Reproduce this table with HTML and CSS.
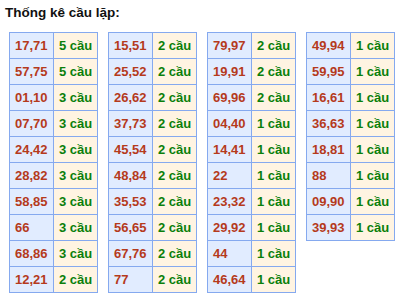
FILE: index.html
```html
<!DOCTYPE html>
<html>
<head>
<meta charset="utf-8">
<link rel="stylesheet" href="styles.css">
</head>
<body>
<div class="title">Thống kê cầu lặp:</div>
<div class="tables">
  <div class="tbl">
    <div class="row"><div class="num">17,71</div><div class="cnt">5 cầu</div></div>
    <div class="row"><div class="num">57,75</div><div class="cnt">5 cầu</div></div>
    <div class="row"><div class="num">01,10</div><div class="cnt">3 cầu</div></div>
    <div class="row"><div class="num">07,70</div><div class="cnt">3 cầu</div></div>
    <div class="row"><div class="num">24,42</div><div class="cnt">3 cầu</div></div>
    <div class="row"><div class="num">28,82</div><div class="cnt">3 cầu</div></div>
    <div class="row"><div class="num">58,85</div><div class="cnt">3 cầu</div></div>
    <div class="row"><div class="num">66</div><div class="cnt">3 cầu</div></div>
    <div class="row"><div class="num">68,86</div><div class="cnt">3 cầu</div></div>
    <div class="row"><div class="num">12,21</div><div class="cnt">2 cầu</div></div>
  </div>
  <div class="tbl">
    <div class="row"><div class="num">15,51</div><div class="cnt">2 cầu</div></div>
    <div class="row"><div class="num">25,52</div><div class="cnt">2 cầu</div></div>
    <div class="row"><div class="num">26,62</div><div class="cnt">2 cầu</div></div>
    <div class="row"><div class="num">37,73</div><div class="cnt">2 cầu</div></div>
    <div class="row"><div class="num">45,54</div><div class="cnt">2 cầu</div></div>
    <div class="row"><div class="num">48,84</div><div class="cnt">2 cầu</div></div>
    <div class="row"><div class="num">35,53</div><div class="cnt">2 cầu</div></div>
    <div class="row"><div class="num">56,65</div><div class="cnt">2 cầu</div></div>
    <div class="row"><div class="num">67,76</div><div class="cnt">2 cầu</div></div>
    <div class="row"><div class="num">77</div><div class="cnt">2 cầu</div></div>
  </div>
  <div class="tbl">
    <div class="row"><div class="num">79,97</div><div class="cnt">2 cầu</div></div>
    <div class="row"><div class="num">19,91</div><div class="cnt">2 cầu</div></div>
    <div class="row"><div class="num">69,96</div><div class="cnt">2 cầu</div></div>
    <div class="row"><div class="num">04,40</div><div class="cnt">1 cầu</div></div>
    <div class="row"><div class="num">14,41</div><div class="cnt">1 cầu</div></div>
    <div class="row"><div class="num">22</div><div class="cnt">1 cầu</div></div>
    <div class="row"><div class="num">23,32</div><div class="cnt">1 cầu</div></div>
    <div class="row"><div class="num">29,92</div><div class="cnt">1 cầu</div></div>
    <div class="row"><div class="num">44</div><div class="cnt">1 cầu</div></div>
    <div class="row"><div class="num">46,64</div><div class="cnt">1 cầu</div></div>
  </div>
  <div class="tbl">
    <div class="row"><div class="num">49,94</div><div class="cnt">1 cầu</div></div>
    <div class="row"><div class="num">59,95</div><div class="cnt">1 cầu</div></div>
    <div class="row"><div class="num">16,61</div><div class="cnt">1 cầu</div></div>
    <div class="row"><div class="num">36,63</div><div class="cnt">1 cầu</div></div>
    <div class="row"><div class="num">18,81</div><div class="cnt">1 cầu</div></div>
    <div class="row"><div class="num">88</div><div class="cnt">1 cầu</div></div>
    <div class="row"><div class="num">09,90</div><div class="cnt">1 cầu</div></div>
    <div class="row"><div class="num">39,93</div><div class="cnt">1 cầu</div></div>
  </div>
</div>
</body>
</html>
```
FILE: styles.css
```css
html, body {
  margin: 0;
  padding: 0;
  background: #ffffff;
}
body {
  padding: 5px 0 0 5px;
  font-family: "Liberation Sans", Arial, sans-serif;
}
.title {
  font-size: 13.5px;
  font-weight: bold;
  color: #111111;
  line-height: 16px;
  height: 16px;
}
.tables {
  display: flex;
  align-items: flex-start;
  gap: 10px;
  margin-top: 11px;
  padding-left: 4px;
}
.tbl {
  width: 89px;
  box-sizing: border-box;
  border-left: 1px solid #85a9ef;
  border-top: 1px solid #85a9ef;
}
.row {
  display: flex;
}
.row > div {
  width: 44px;
  height: 26px;
  box-sizing: border-box;
  border-right: 1px solid #85a9ef;
  border-bottom: 1px solid #85a9ef;
  font-size: 13px;
  font-weight: bold;
  line-height: 25px;
  padding-left: 5px;
  white-space: nowrap;
}
.num {
  background: #e1ecff;
  color: #b53a1c;
}
.cnt {
  background: #fff4e2;
  color: #0b7f0b;
}
```
